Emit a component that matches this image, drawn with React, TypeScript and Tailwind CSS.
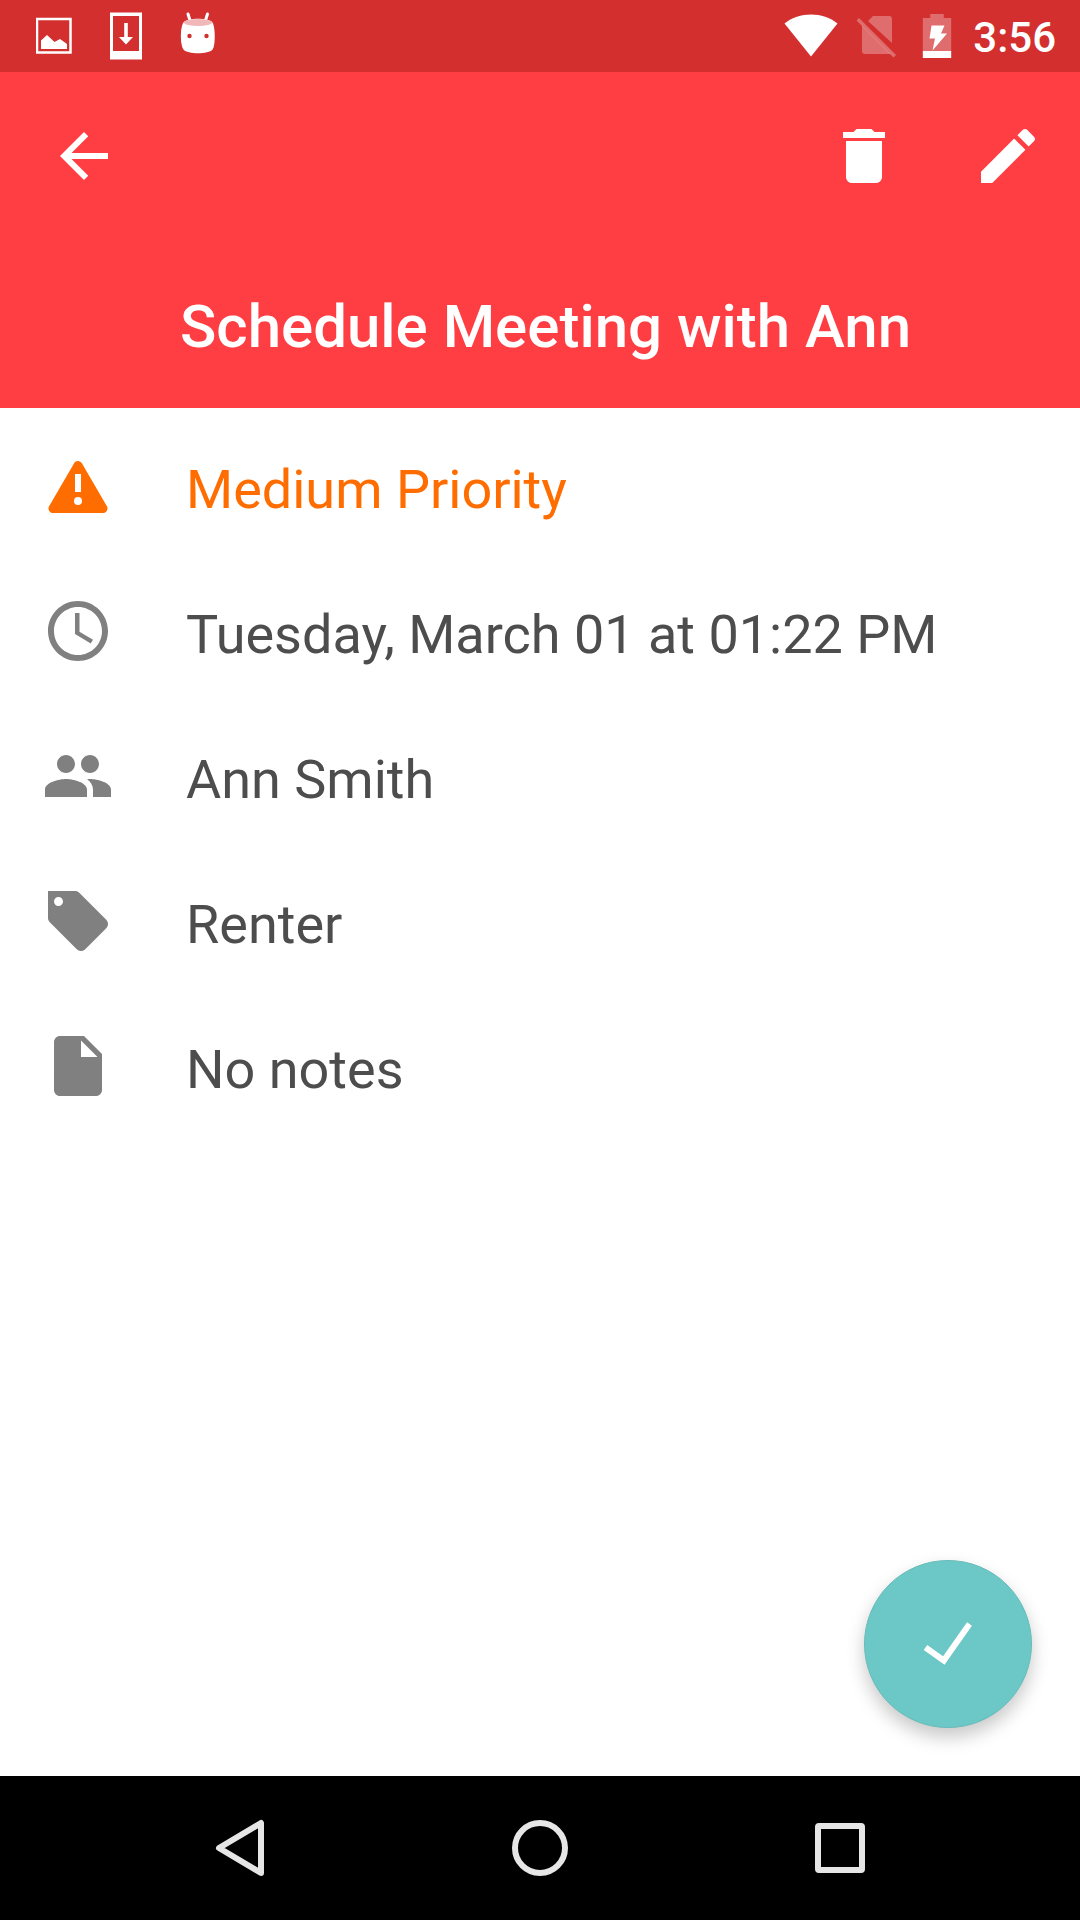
import React from "react";

function Material({ d, className }: { d: string; className: string }) {
  return (
    <svg viewBox="0 0 24 24" fill="currentColor" className={className} aria-hidden="true">
      <path d={d} fillRule="evenodd" />
    </svg>
  );
}

function StatusBar() {
  return (
    <div className="flex h-[72px] items-center justify-between bg-[#d32f2f] pr-6 pl-9 text-white">
      <div className="flex items-center gap-[37px]">
        <svg viewBox="0 0 36 48" className="h-12 w-9" aria-label="Image saved">
          <path d="M1 7h33.500v33.500H1z" fill="none" stroke="currentColor" strokeWidth="2.500" />
          <path d="M5 37V28.500L11 23l7.500 7 5.500-3 7 5v5z" fill="currentColor" />
        </svg>
        <svg viewBox="0 0 34 48" className="h-12 w-[34px]" aria-label="Download">
          <path fillRule="evenodd" d="M1 .5h32v47H1zM4 4v35h26V4z" fill="currentColor" />
          <path d="M15.200 11h3.600v14H24l-7 7.500L10 25h5.200z" fill="currentColor" />
        </svg>
        <svg viewBox="0 0 36 48" className="h-12 w-9" aria-label="Android">
          <path d="M8 2l2.500 8M27.500 2l-2.500 8" stroke="currentColor" strokeWidth="3" strokeLinecap="round" />
          <path d="M3.500 10.500C0 15 0 33 3.500 37.500c4 5 25 5 29 0 3-4 3-22 0-27-4-5-25-5-29 0z" fill="currentColor" />
          <ellipse cx="18" cy="10.500" rx="14" ry="3.500" fill="#f0b8b8" />
          <circle cx="9.500" cy="24" r="2.200" fill="#d32f2f" />
          <circle cx="26.500" cy="24" r="2.200" fill="#d32f2f" />
        </svg>
      </div>
      <div className="flex items-center">
        <svg viewBox="0 0 54 44" className="h-11 w-[54px]" aria-label="Wi-Fi">
          <path d="M.5 9.500C15-2.500 39-2.500 53.500 9.500L27 42.500z" fill="currentColor" />
        </svg>
        <svg viewBox="0 0 40 44" className="ml-[18px] h-11 w-10" fill="currentColor" aria-label="No SIM">
          <path opacity=".3" d="M12 7l5-5h16a3 3 0 0 1 3 3v24zM6 11.500L34.500 40H9a3 3 0 0 1-3-3z" />
          <path opacity=".3" d="M3 4l37 37-2.500 2.500L.5 6.500z" />
        </svg>
        <svg viewBox="0 0 30 46" className="ml-[26px] h-[46px] w-[30px]" fill="currentColor" aria-label="Battery charging">
          <path opacity=".3" d="M.8 5h7.500V1h13.400v4h7.500v33H.8z" />
          <path d="M9.500 12.500h13L19 20.500h6L10.500 37.500l2.500-12H7.500zM.8 38h28.400v7H.8z" />
        </svg>
        <span className="ml-[21px] pt-1 text-[42px] leading-[48px] font-medium">3:56</span>
      </div>
    </div>
  );
}

const rows = [
  {
    text: "Tuesday, March 01 at 01:22 PM",
    label: "Date",
    d: "M11.990 2C6.470 2 2 6.480 2 12s4.470 10 9.990 10C17.520 22 22 17.520 22 12S17.520 2 11.990 2zM12 20c-4.420 0-8-3.580-8-8s3.580-8 8-8 8 3.580 8 8-3.580 8-8 8zM12.500 6H11v7l5.250 3.150.75-1.230-4.500-2.670z",
  },
  {
    text: "Ann Smith",
    label: "Contact",
    d: "M16 11c1.660 0 2.990-1.340 2.990-3S17.660 5 16 5c-1.660 0-3 1.340-3 3s1.340 3 3 3zm-8 0c1.660 0 2.990-1.340 2.990-3S9.660 5 8 5C6.340 5 5 6.340 5 8s1.340 3 3 3zm0 2c-2.330 0-7 1.170-7 3.500V19h14v-2.500c0-2.330-4.670-3.500-7-3.500zm8 0c-.29 0-.62.020-.97.050 1.160.84 1.970 1.970 1.970 3.450V19h6v-2.500c0-2.330-4.670-3.500-7-3.500z",
  },
  {
    text: "Renter",
    label: "Type",
    d: "M21.410 11.580l-9-9C12.050 2.220 11.550 2 11 2H2v9c0 .55.220 1.050.59 1.420l9 9c.36.360.860.580 1.410.580.550 0 1.050-.22 1.410-.59l7-7c.37-.36.590-.86.590-1.410 0-.55-.23-1.060-.59-1.420zM5.500 7C4.670 7 4 6.330 4 5.500S4.670 4 5.500 4 7 4.670 7 5.500 6.330 7 5.500 7z",
  },
  {
    text: "No notes",
    label: "Notes",
    d: "M6 2c-1.100 0-1.990.9-1.990 2L4 20c0 1.100.890 2 1.990 2H18c1.100 0 2-.9 2-2V8l-6-6H6zm7 7V3.500L18.500 9H13z",
  },
];

export default function App() {
  return (
    <div className="flex min-h-screen flex-col bg-white font-[Roboto,sans-serif]">
      <StatusBar />
      <header className="bg-[#ff3e43] pb-[45px] text-white">
        <div className="flex items-center gap-[72px] px-9 pt-12">
          <button aria-label="Back" className="mr-auto ml-3">
            <Material className="size-[72px]" d="M20 11H7.830l5.590-5.590L12 4l-8 8 8 8 1.410-1.410L7.830 13H20v-2z" />
          </button>
          <button aria-label="Delete">
            <Material className="size-[72px]" d="M6 19c0 1.100.9 2 2 2h8c1.100 0 2-.9 2-2V7H6v12zM19 4h-3.500l-1-1h-5l-1 1H5v2h14V4z" />
          </button>
          <button aria-label="Edit">
            <Material className="size-[72px]" d="M3 17.250V21h3.750L17.810 9.940l-3.750-3.750L3 17.250zM20.710 7.040c.39-.39.390-1.020 0-1.410l-2.340-2.340c-.39-.39-1.020-.39-1.410 0l-1.830 1.830 3.750 3.750 1.830-1.830z" />
          </button>
        </div>
        <h1 className="mt-[99px] pl-[180px] text-[60px] leading-[72px] font-medium">Schedule Meeting with Ann</h1>
      </header>
      <main className="flex grow flex-col">
        <ul className="flex flex-col gap-[65px] px-[42px] pt-[42px] text-[54px] leading-[80px] text-[#4d4d4d]">
          <li className="flex items-start gap-[72px] text-[#ff6d00]">
            <svg viewBox="0 0 72 72" className="size-[72px] shrink-0" aria-label="Priority">
              <path d="M36 15.500L11 58.500h50z" fill="currentColor" stroke="currentColor" strokeWidth="9" strokeLinejoin="round" />
              <path d="M33 24h6v18h-6z" fill="#fff" />
              <circle cx="36" cy="51" r="4" fill="#fff" />
            </svg>
            <span>Medium Priority</span>
          </li>
          {rows.map((row) => (
            <li key={row.label} className="flex items-start gap-[72px]">
              <Material className="size-[72px] shrink-0 text-[#808080]" d={row.d} />
              <span>{row.text}</span>
            </li>
          ))}
        </ul>
        <button
          aria-label="Mark as done"
          className="mt-auto mr-12 mb-12 flex size-[168px] items-center justify-center self-end rounded-full border border-[#68bcb9] bg-[#6cc8c6] text-white shadow-[0_9px_18px_rgba(0,0,0,0.22)]"
        >
          <svg viewBox="0 0 72 72" className="size-[72px]" fill="none" aria-hidden="true">
            <path d="M13.500 39.500l18.300 13L57.500 16" stroke="currentColor" strokeWidth="6" />
          </svg>
        </button>
      </main>
      <nav className="flex h-36 items-center bg-black px-[90px] text-[#e6e6e6]">
        <button aria-label="Back" className="flex flex-1 justify-center">
          <svg viewBox="0 0 60 60" className="size-[60px]" fill="none" stroke="currentColor" strokeWidth="6" strokeLinejoin="round">
            <path d="M51 5v50L9 30z" />
          </svg>
        </button>
        <button aria-label="Home" className="flex flex-1 justify-center">
          <svg viewBox="0 0 60 60" className="size-[60px]" fill="none" stroke="currentColor" strokeWidth="6">
            <circle cx="30" cy="30" r="25" />
          </svg>
        </button>
        <button aria-label="Recent apps" className="flex flex-1 justify-center">
          <svg viewBox="0 0 60 60" className="size-[60px]" fill="none" stroke="currentColor" strokeWidth="6">
            <rect x="8" y="8" width="44" height="44" rx="1" />
          </svg>
        </button>
      </nav>
    </div>
  );
}
